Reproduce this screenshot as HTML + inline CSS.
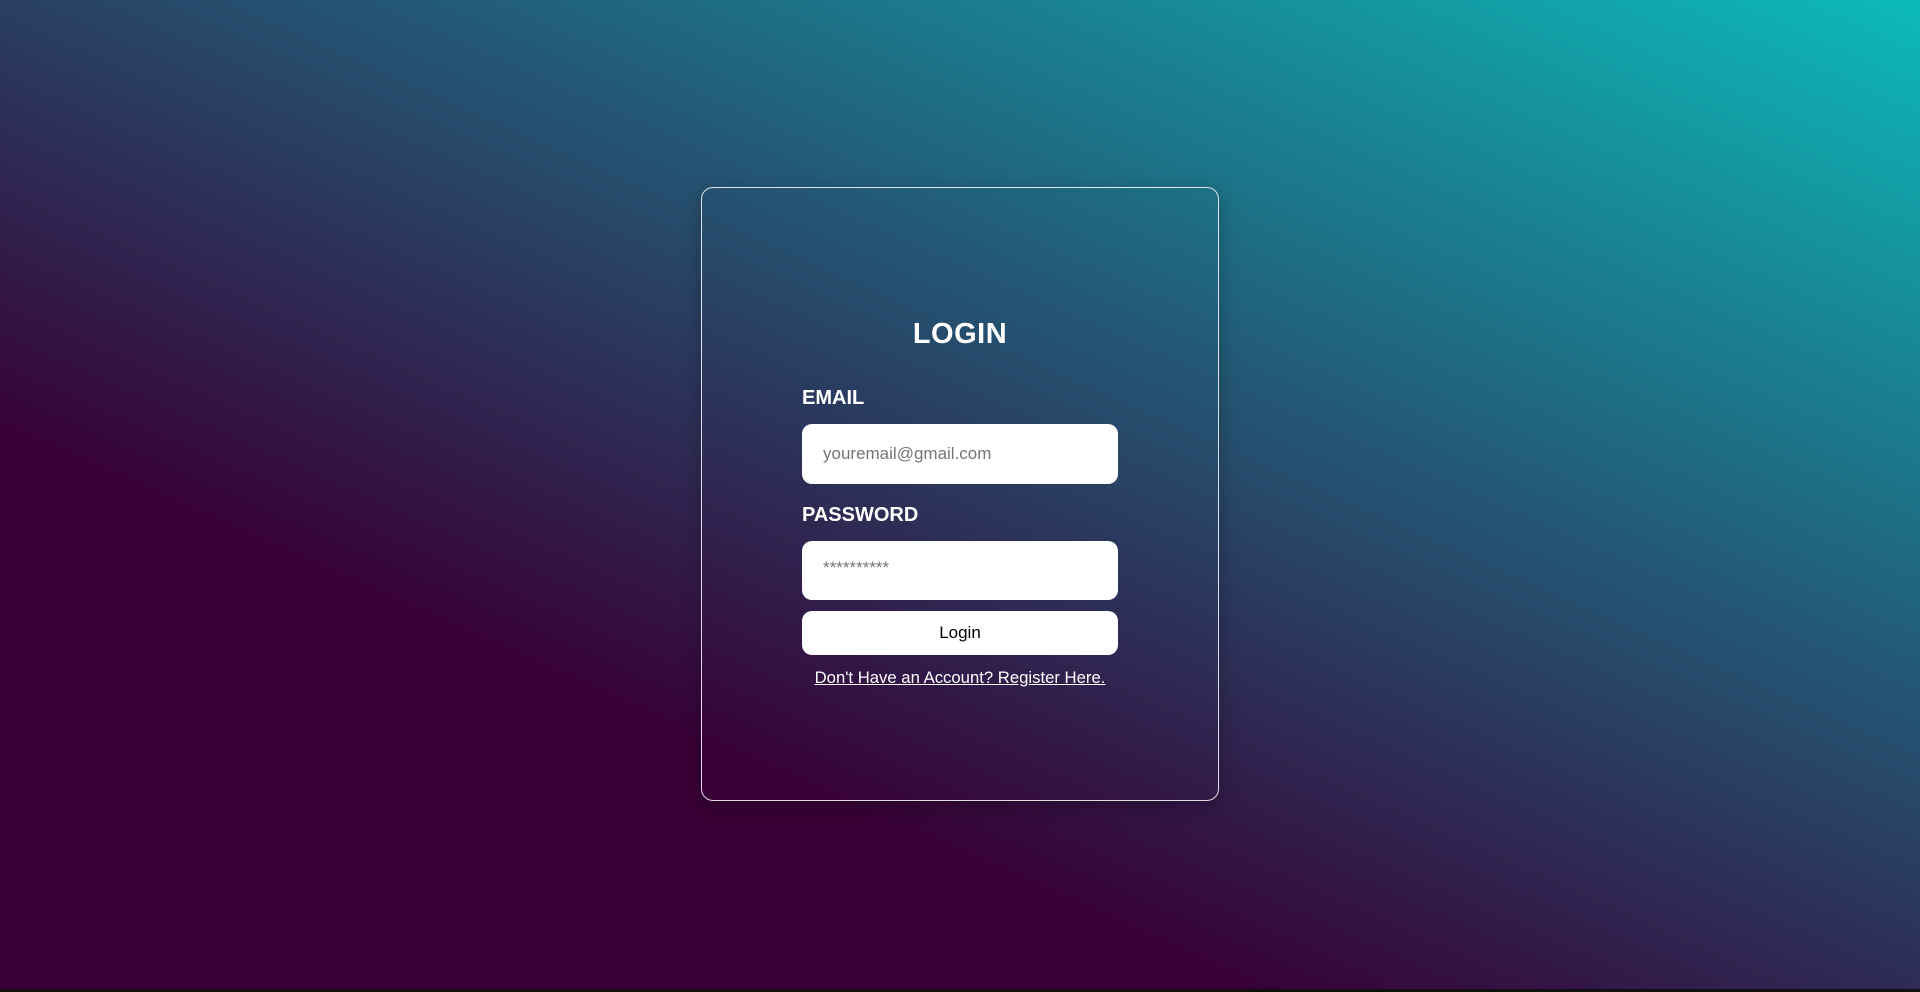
<!DOCTYPE html>
<html><head><meta charset="utf-8"><style>
html,body{margin:0;padding:0;width:1920px;height:992px;overflow:hidden}
body{background:linear-gradient(24deg,#380036 30%,#0cbaba 100%);font-family:"Liberation Sans",sans-serif;position:relative}
.bar{position:absolute;left:0;bottom:0;width:1920px;height:3px;background:#111}
.card{position:absolute;left:701px;top:187px;width:518px;height:614px;box-sizing:border-box;border:1px solid rgba(255,255,255,.85);border-radius:12px;box-shadow:0 6px 18px rgba(0,0,0,.25)}
h1{position:absolute;left:0;width:1920px;top:318px;margin:0;text-align:center;color:#fff;font-size:29px;font-weight:bold;letter-spacing:.5px}
.lbl{position:absolute;left:802px;color:#fff;font-weight:bold;font-size:20px}
.inp{position:absolute;left:802px;width:316px;height:60px;background:#fff;border-radius:10px;box-sizing:border-box;padding-left:21px;line-height:60px;color:#757575;font-size:17px}
.btn{position:absolute;left:802px;top:611px;width:316px;height:44px;background:#fff;border-radius:10px;text-align:center;line-height:44px;font-size:17px;color:#000}
.link{position:absolute;left:0;width:1920px;top:668px;text-align:center;color:#fff;font-size:16.7px;text-decoration:underline}
</style></head><body>
<div class="card"></div>
<h1>LOGIN</h1>
<div class="lbl" style="top:387px">EMAIL</div>
<div class="inp" style="top:424px">youremail@gmail.com</div>
<div class="lbl" style="top:504px">PASSWORD</div>
<div class="inp" style="top:541px;height:59px;line-height:54px">**********</div>
<div class="btn">Login</div>
<div class="link">Don't Have an Account? Register Here.</div>
<div class="bar"></div>
</body></html>
